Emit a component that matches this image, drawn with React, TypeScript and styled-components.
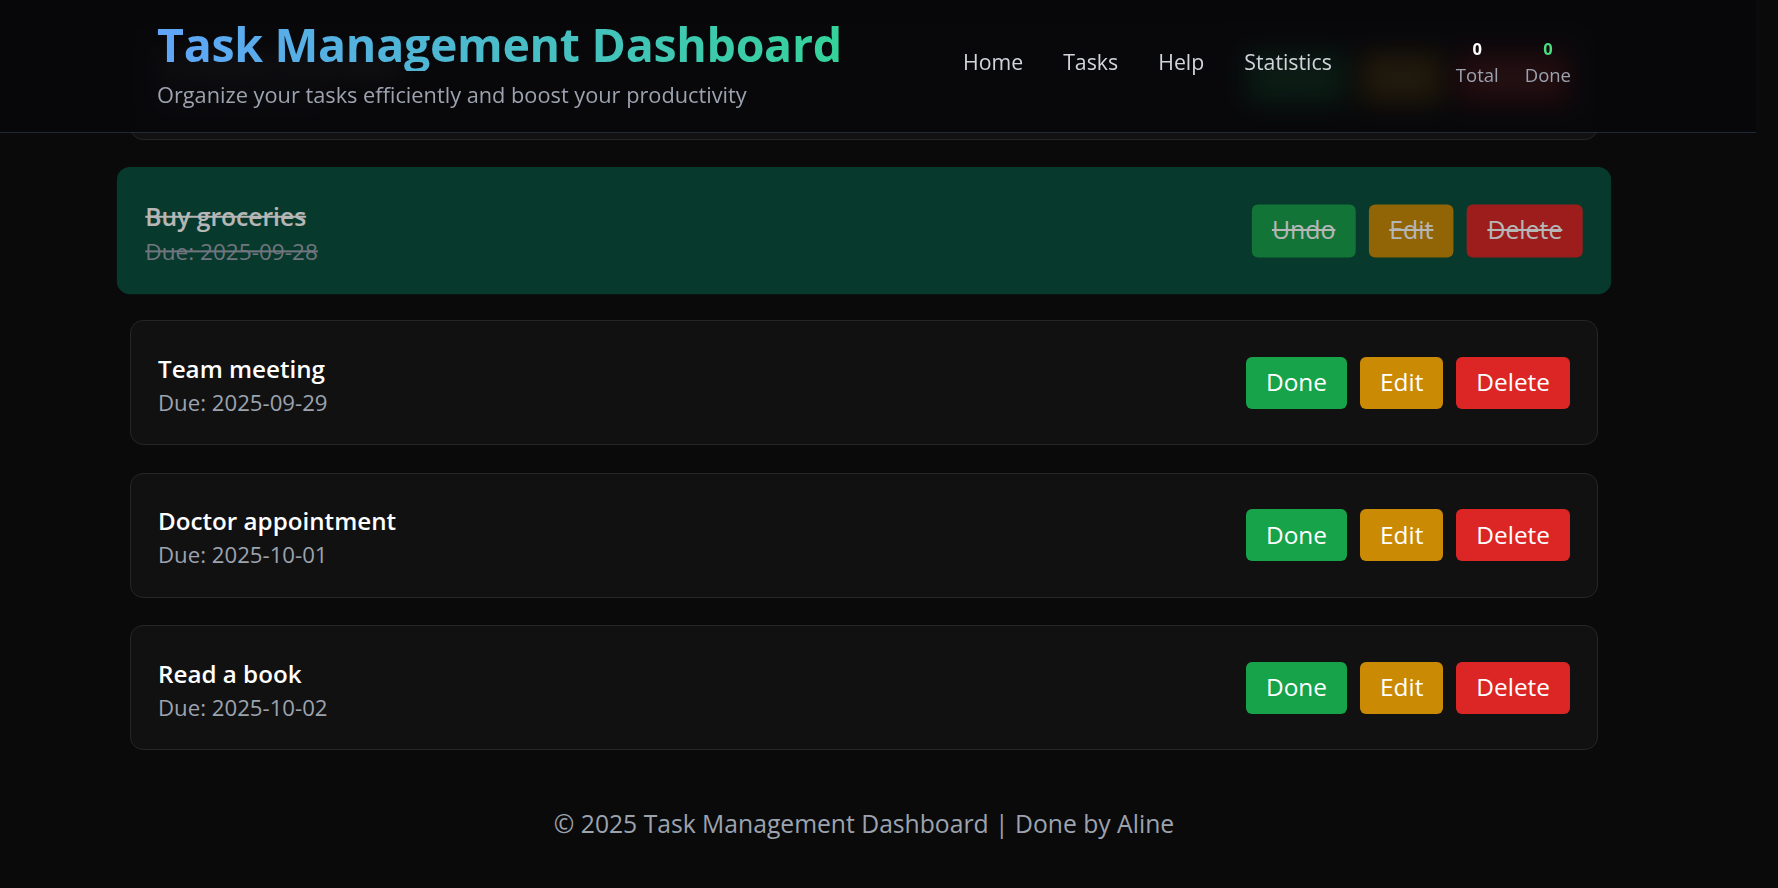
import React from "react";
import styled, { createGlobalStyle, css } from "styled-components";

const GlobalStyle = createGlobalStyle`
  html, body {
    margin: 0;
    padding: 0;
    background: #0a0a0a;
  }
  body {
    font-family: "Open Sans", "Noto Sans", sans-serif;
    color: #ffffff;
    overflow: hidden;
  }
  * { box-sizing: border-box; }
`;

const Shell = styled.div`
  width: 1728px;
  min-height: 888px;
`;

const Header = styled.header`
  position: fixed;
  top: 0;
  left: 0;
  right: 22px;
  height: 133px;
  padding-bottom: 8px;
  background: rgba(7, 7, 10, 0.88);
  backdrop-filter: blur(12px);
  -webkit-backdrop-filter: blur(12px);
  border-bottom: 1px solid #1e2a3a;
  z-index: 10;
`;

const HeaderBar = styled.div`
  width: 1728px;
  height: 100%;
`;

const Container = styled.div`
  width: 1468px;
  margin: 0 auto;
`;

const HeaderInner = styled(Container)`
  height: 100%;
  padding: 0 27px;
  display: flex;
  align-items: center;
  justify-content: space-between;
`;

const Brand = styled.div`
  display: flex;
  flex-direction: column;
  align-items: flex-start;
  margin-top: 2px;
`;

const Title = styled.h1`
  margin: 0;
  font-size: 46.5px;
  font-weight: 700;
  line-height: 54px;
  letter-spacing: -0.3px;
  background: linear-gradient(90deg, #60a5fa 0%, #34d399 100%);
  -webkit-background-clip: text;
  background-clip: text;
  color: transparent;
`;

const Subtitle = styled.p`
  margin: 9px 0 0;
  font-size: 21.75px;
  line-height: 30px;
  color: #9ca3af;
`;

const RightSide = styled.div`
  display: flex;
  align-items: center;
  gap: 124px;
`;

const Nav = styled.nav`
  display: flex;
  align-items: center;
  gap: 40px;
`;

const NavLink = styled.a`
  font-size: 21.3px;
  line-height: 30px;
  color: #d1d5db;
  text-decoration: none;
`;

const Stats = styled.div`
  display: flex;
  gap: 26px;
  margin-top: 2px;
`;

const Stat = styled.div`
  display: flex;
  flex-direction: column;
  align-items: center;
`;

const StatValue = styled.span<{ $accent?: boolean }>`
  font-size: 16.5px;
  font-weight: 700;
  line-height: 24px;
  color: ${(p) => (p.$accent ? "#4ade80" : "#ffffff")};
`;

const StatLabel = styled.span`
  font-size: 18.5px;
  line-height: 28px;
  color: #9ca3af;
`;

const Main = styled(Container)`
  padding-top: 15px;
  display: flex;
  flex-direction: column;
  gap: 27.5px;
`;

const Card = styled.div<{ $done?: boolean }>`
  height: 125px;
  padding: 0 27px;
  display: flex;
  align-items: center;
  justify-content: space-between;
  background: #111111;
  border: 1px solid #262626;
  border-radius: 13px;
  ${(p) =>
    p.$done &&
    css`
      background: #064e3b;
      border-color: #064e3b;
      opacity: 0.7;
      transform: scale(1.018);
    `}
`;

const Info = styled.div`
  display: flex;
  flex-direction: column;
  margin-top: 5px;
`;

const strike = css<{ $done?: boolean }>`
  text-decoration: ${(p) => (p.$done ? "line-through" : "none")};
`;

const TaskTitle = styled.span<{ $done?: boolean }>`
  font-size: 24.2px;
  font-weight: 600;
  line-height: 32px;
  color: #ffffff;
  ${strike}
`;

const TaskDue = styled.span<{ $done?: boolean }>`
  margin-top: 3px;
  font-size: 22.2px;
  line-height: 30px;
  color: #9ca3af;
  ${strike}
`;

const Actions = styled.div`
  display: flex;
  gap: 13px;
`;

const tones = {
  green: "#16a34a",
  amber: "#ca8a04",
  red: "#dc2626",
};

const ActionButton = styled.button<{ $tone: keyof typeof tones; $done?: boolean }>`
  height: 52px;
  padding: 0 20px;
  border: none;
  border-radius: 6px;
  background: ${(p) => tones[p.$tone]};
  color: #ffffff;
  font-family: inherit;
  font-size: 24.4px;
  line-height: 1;
  cursor: pointer;
  ${strike}
`;

const Footer = styled.footer`
  margin-top: 59px;
  text-align: center;
  font-size: 24.7px;
  line-height: 30px;
  color: #9ca3af;
`;

type Task = { title: string; due: string; done: boolean };

const tasks: Task[] = [
  { title: "Complete the project", due: "2025-09-27", done: false },
  { title: "Buy groceries", due: "2025-09-28", done: true },
  { title: "Team meeting", due: "2025-09-29", done: false },
  { title: "Doctor appointment", due: "2025-10-01", done: false },
  { title: "Read a book", due: "2025-10-02", done: false },
];

export default function App() {
  return (
    <>
      <GlobalStyle />
      <Header>
        <HeaderBar>
          <HeaderInner>
            <Brand>
              <Title>Task Management Dashboard</Title>
              <Subtitle>Organize your tasks efficiently and boost your productivity</Subtitle>
            </Brand>
            <RightSide>
              <Nav>
                <NavLink href="#">Home</NavLink>
                <NavLink href="#">Tasks</NavLink>
                <NavLink href="#">Help</NavLink>
                <NavLink href="#">Statistics</NavLink>
              </Nav>
              <Stats>
                <Stat>
                  <StatValue>0</StatValue>
                  <StatLabel>Total</StatLabel>
                </Stat>
                <Stat>
                  <StatValue $accent>0</StatValue>
                  <StatLabel>Done</StatLabel>
                </Stat>
              </Stats>
            </RightSide>
          </HeaderInner>
        </HeaderBar>
      </Header>
      <Shell>
        <Main>
          {tasks.map((t) => (
            <Card key={t.title} $done={t.done}>
              <Info>
                <TaskTitle $done={t.done}>{t.title}</TaskTitle>
                <TaskDue $done={t.done}>Due: {t.due}</TaskDue>
              </Info>
              <Actions>
                <ActionButton $tone="green" $done={t.done}>{t.done ? "Undo" : "Done"}</ActionButton>
                <ActionButton $tone="amber" $done={t.done}>Edit</ActionButton>
                <ActionButton $tone="red" $done={t.done}>Delete</ActionButton>
              </Actions>
            </Card>
          ))}
        </Main>
        <Footer>© 2025 Task Management Dashboard | Done by Aline</Footer>
      </Shell>
    </>
  );
}
